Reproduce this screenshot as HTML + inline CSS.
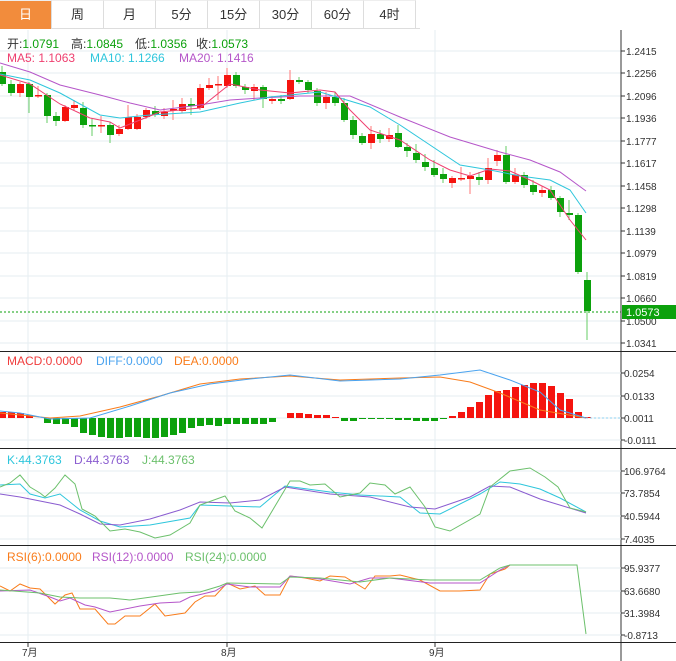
<!DOCTYPE html>
<html><head><meta charset="utf-8"><style>
body{margin:0;width:676px;height:661px;overflow:hidden;background:#fff;font-family:"Liberation Sans","Noto Sans CJK SC",sans-serif;}
.tabs{position:absolute;left:0;top:0;height:28px;width:420px;border-bottom:1px solid #ddd;display:flex}
.tabs div{width:51px;height:28px;line-height:28px;text-align:center;font-size:13px;color:#333;border-right:1px solid #ddd;border-top:1px solid #eee}
.tabs div.on{background:#f28c3c;color:#fff}
svg{position:absolute;left:0;top:0}
</style></head><body>
<div class="tabs"><div class="on">日</div><div>周</div><div>月</div><div>5分</div><div>15分</div><div>30分</div><div>60分</div><div>4时</div></div>
<svg id="s" width="676" height="661" viewBox="0 0 676 661" font-family="Liberation Sans, Noto Sans CJK SC, sans-serif"></svg>
<script>
var s=document.getElementById('s'),h='';
function L(x1,y1,x2,y2,c,w,d){h+='<line x1="'+x1+'" y1="'+y1+'" x2="'+x2+'" y2="'+y2+'" stroke="'+c+'" stroke-width="'+(w||1)+'"'+(d?' stroke-dasharray="'+d+'"':'')+'/>';}
function R(x,y,w,hh,c){h+='<rect x="'+x+'" y="'+y+'" width="'+w+'" height="'+hh+'" fill="'+c+'"/>';}
function T(x,y,t,c,fs){h+='<text x="'+x+'" y="'+y+'" fill="'+c+'" font-size="'+(fs||12)+'">'+t+'</text>';}
function P(a,c){var p=[];for(var i=0;i<a.length;i+=2)p.push(a[i]+','+a[i+1]);h+='<polyline points="'+p.join(' ')+'" fill="none" stroke="'+c+'" stroke-width="1"/>';}
var g='#e6edf2';
var ml=[[51,'1.2415'],[73,'1.2256'],[96,'1.2096'],[118,'1.1936'],[141,'1.1777'],[163,'1.1617'],[186,'1.1458'],[208,'1.1298'],[231,'1.1139'],[253,'1.0979'],[276,'1.0819'],[298,'1.0660'],[321,'1.0500'],[343,'1.0341']];
ml.forEach(function(m){L(0,m[0],621,m[0],g);L(621,m[0],625,m[0],'#333');T(626,m[0]+4,m[1],'#333',10);});
[28,227,435].forEach(function(x){L(x,30,x,643,g);});
var C=[[2,72,84,66,86],[11,84,93,80,96],[20,84,93,82,97],[29,84,97,82,113],[38,95,96,86,98],[47,95,116,93,123],[56,116,121,112,126],[65,107,121,105,122],[74,105,108,100,110],[83,108,125,102,128],[92,125,126,118,136],[101,125,126,116,133],[110,125,135,122,143],[119,129,134,125,136],[128,117,129,105,130],[137,117,129,114,130],[146,110,117,108,119],[155,111,115,106,117],[164,112,116,108,119],[173,109,110,100,120],[182,104,111,98,113],[191,104,106,98,115],[200,88,108,84,110],[209,85,88,78,90],[218,84,85,76,100],[227,75,86,68,88],[236,75,86,72,88],[245,87,90,84,94],[254,87,91,84,100],[263,87,99,85,108],[272,99,101,96,104],[281,99,101,95,104],[290,80,99,70,100],[299,80,82,77,84],[308,82,90,80,93],[317,91,103,88,106],[326,97,103,92,109],[335,97,103,92,106],[344,103,120,98,122],[353,120,135,116,139],[362,136,143,133,145],[371,134,143,126,149],[380,134,139,130,143],[389,135,139,128,142],[398,133,147,125,148],[407,147,151,143,157],[416,153,160,144,163],[425,162,167,154,171],[434,168,175,160,177],[443,174,179,168,183],[452,178,183,176,188],[461,178,179,167,181],[470,176,179,172,194],[479,177,180,172,185],[488,168,180,158,184],[497,155,161,150,166],[506,155,182,146,184],[515,175,182,168,184],[524,175,185,172,188],[533,185,192,180,195],[542,190,193,186,197],[551,190,198,186,200],[560,198,212,196,217],[569,213,215,200,220],[578,215,272,213,274],[587,280,311,272,340]];
var reds=[3,5,8,9,12,14,15,16,17,19,20,21,23,24,25,26,29,31,33,37,42,44,51,52,53,55,56,58,61];
C.forEach(function(c,i){var r=reds.indexOf(i+1)>=0;var col=r?'#f5140f':'#0ca10c';var wc=r?'#f77':'#6c6';
 L(c[0],c[3],c[0],c[4],wc);var t=Math.min(c[1],c[2]),b=Math.max(c[1],c[2]);R(c[0]-3,t,7,Math.max(1.5,b-t),col);});
P([0,63,30,72,60,85,100,95,130,103,160,110,200,105,230,100,260,98,300,96,350,96,400,117,450,137,500,152,530,160,560,172,586,191],'#b556c9');
P([0,74,30,80,60,93,100,115,120,118,150,115,200,112,240,103,270,97,320,92,330,95,370,107,400,125,430,145,460,165,490,170,520,176,550,180,570,190,586,213],'#2ec6dc');
P([0,75,30,84,60,104,90,118,110,122,120,128,140,120,160,112,200,108,230,84,260,90,290,93,320,90,335,92,350,110,370,130,400,140,430,160,450,170,470,176,490,169,510,171,530,180,550,190,570,220,586,240],'#ef3f6f');
L(0,312,621,312,'#0ca10c',1,'2,2');R(622,305,54,14,'#0ca10c');T(626,316,'1.0573','#fff',11);
L(621,30,621,661,'#333');[351.5,448.5,545.5,642.5].forEach(function(y){L(0,y,676,y,'#222');});
[[373,'0.0254'],[396,'0.0133'],[418,'0.0011'],[440,'-0.0111']].forEach(function(m){L(0,m[0],621,m[0],g);L(621,m[0],625,m[0],'#333');T(624,m[0]+4,m[1],'#333',10);});
var hv=[6,6,5,3,0,-5,-6,-6,-9,-15,-17,-19,-20,-20,-19,-19,-20,-20,-19,-17,-15,-10,-8,-7,-8,-6,-6,-6,-6,-6,-4,0,5,5,4,3,3,1,-3,-3,-1,-1,-1,-1,-2,-2,-3,-3,-3,-1,2,6,11,16,23,27,28,31,33,35,35,32,25,19,6,1];
C.forEach(function(c,i){var v=hv[i]||0;if(v>0)R(c[0]-3,418-v,7,v,'#f5140f');else if(v<0)R(c[0]-3,418,7,-v,'#0ca10c');});
P([0,413,50,418,80,416,120,407,160,396,200,384,240,379,290,376,340,380,400,378,440,377,470,382,500,393,540,410,586,418],'#f97c1b');
P([0,411,20,413,50,419,90,418,130,406,170,393,210,384,250,379,290,375,340,381,400,379,440,375,480,370,510,380,540,392,560,410,586,418],'#4aa3ef');
L(586,418,621,418,'#8cd0f0',1,'2,2');
T(7,365,'MACD:0.0000','#f03c3c',12);T(96,365,'DIFF:0.0000','#4aa3ef',12);T(174,365,'DEA:0.0000','#f97c1b',12);
[[471,'106.9764'],[493,'73.7854'],[516,'40.5944'],[539,'7.4035']].forEach(function(m){L(0,m[0],621,m[0],g);L(621,m[0],625,m[0],'#333');T(624,m[0]+4,m[1],'#333',10);});
P([0,485,20,484,30,494,45,498,60,494,80,510,100,521,120,527,150,525,190,518,200,505,230,506,260,507,285,486,300,488,330,492,360,495,400,497,420,513,440,514,480,494,500,482,520,484,540,489,560,498,586,512],'#2ec6dc');
P([0,494,20,497,40,501,60,505,80,514,100,524,120,525,150,519,180,510,200,502,230,503,260,500,285,487,330,494,370,497,410,507,435,509,470,497,490,486,510,487,540,499,586,513],'#8a5cd0');
P([0,487,10,483,20,475,30,487,40,493,45,497,55,488,65,475,75,484,82,509,95,516,110,531,125,529,140,532,155,538,170,535,190,523,200,505,225,496,235,511,250,518,262,528,290,481,300,481,310,485,325,484,340,497,360,493,370,483,385,485,395,494,410,487,425,507,435,527,450,531,480,514,490,487,510,471,530,468,545,477,558,487,570,508,586,512],'#6cc06c');
T(7,464,'K:44.3763','#2ec6dc',12);T(74,464,'D:44.3763','#8a5cd0',12);T(142,464,'J:44.3763','#6cc06c',12);
[[568,'95.9377'],[591,'63.6680'],[613,'31.3984'],[635,'-0.8713']].forEach(function(m){L(0,m[0],621,m[0],g);L(621,m[0],625,m[0],'#333');T(624,m[0]+4,m[1],'#333',10);});
P([0,586,10,591,20,584,30,588,40,589,50,599,55,604,65,595,72,593,80,609,95,609,108,624,115,624,125,616,140,616,155,604,165,616,185,613,195,602,205,596,215,596,227,583,240,589,255,586,265,595,280,595,290,576,305,578,320,581,330,576,345,577,365,589,375,576,390,576,400,575,420,580,440,591,460,591,480,590,490,574,505,569,510,565,577,565],'#f97c1b');
P([0,591,30,590,50,597,60,601,70,598,85,605,95,607,110,612,120,610,140,606,160,603,180,602,190,597,215,591,227,584,250,587,280,587,290,576,320,579,350,584,370,578,390,578,430,583,480,583,500,570,510,565,577,565],'#b556c9');
P([0,590,40,593,60,597,80,598,110,598,130,600,180,593,200,592,220,586,227,583,280,584,290,577,320,578,360,582,390,578,430,580,480,580,500,568,510,565,577,565,586,634],'#6cc06c');
T(7,561,'RSI(6):0.0000','#f97c1b',12);T(92,561,'RSI(12):0.0000','#b556c9',12);T(185,561,'RSI(24):0.0000','#6cc06c',12);
[[28,'7月'],[227,'8月'],[435,'9月']].forEach(function(d){L(d[0],643,d[0],647,'#333');T(d[0]-6,656,d[1],'#333',10);});
function HV(x,k,v){h+='<text x="'+x+'" y="48" font-size="12"><tspan fill="#333">'+k+'</tspan><tspan fill="#0ca10c">'+v+'</tspan></text>';}
HV(7,'开:','1.0791');HV(71,'高:','1.0845');HV(135,'低:','1.0356');HV(196,'收:','1.0573');
T(7,62,'MA5: 1.1063','#ef3f6f',12);T(90,62,'MA10: 1.1266','#2ec6dc',12);T(179,62,'MA20: 1.1416','#b556c9',12);
s.innerHTML=h;
</script>
</body></html>
